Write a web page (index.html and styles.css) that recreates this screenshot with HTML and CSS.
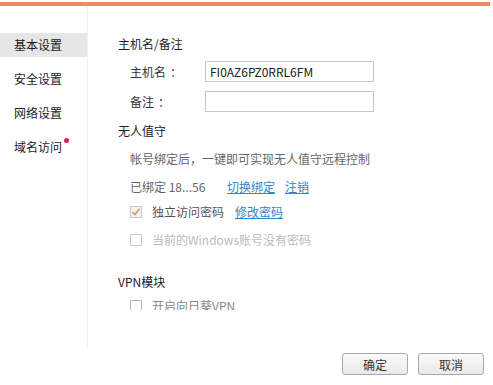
FILE: index.html
```html
<!DOCTYPE html>
<html lang="zh">
<head>
<meta charset="utf-8">
<link rel="stylesheet" href="styles.css">
</head>
<body>
<div class="topbar"></div>
<div class="main">
  <nav class="sidebar">
    <div class="nav-item active">基本设置</div>
    <div class="nav-item">安全设置</div>
    <div class="nav-item">网络设置</div>
    <div class="nav-item">域名访问<span class="dot"></span></div>
  </nav>
  <div class="content">
    <div class="section-title">主机名/备注</div>
    <div class="field first">
      <span class="label">主机名<span class="colon">：</span></span>
      <div class="input">FI0AZ6PZ0RRL6FM</div>
    </div>
    <div class="field">
      <span class="label">备注<span class="colon">：</span></span>
      <div class="input"></div>
    </div>
    <div class="section-title gap9">无人值守</div>
    <div class="line desc">帐号绑定后，一键即可实现无人值守远程控制</div>
    <div class="line bound"><span class="acct">已绑定 18...56</span><a class="link">切换绑定</a><a class="link">注销</a></div>
    <div class="line check-row"><span class="cb checked"><svg width="10" height="10" viewBox="0 0 10 10"><path d="M1.5 5.2 L4 7.6 L8.6 2" fill="none" stroke="#d49a6a" stroke-width="1.6"/></svg></span><span class="cb-text">独立访问密码</span><a class="link link-pw">修改密码</a></div>
    <div class="line check-row disabled"><span class="cb"></span><span class="cb-text">当前的Windows账号没有密码</span></div>
    <div class="section-title vpn">VPN模块</div>
    <div class="line check-row vpn-row"><span class="cb"></span><span class="cb-text">开启向日葵VPN</span></div>
  </div>
</div>
<div class="footer">
  <button class="btn">确定</button>
  <button class="btn">取消</button>
</div>
</body>
</html>
```

FILE: styles.css
```css
html, body {
  margin: 0;
  padding: 0;
  background: #ffffff;
}
body {
  width: 493px;
  height: 385px;
  overflow: hidden;
  font-family: "Noto Sans CJK SC", "Microsoft YaHei", sans-serif;
  font-size: 12px;
  color: #333333;
}
.topbar {
  margin-top: 2px;
  height: 4px;
  width: 490px;
  background: #f08b5e;
}
.main {
  display: flex;
  height: 344px;
}
.sidebar {
  width: 88px;
  flex: none;
  border-right: 1px solid #f1f1f1;
  padding-top: 27px;
  box-sizing: border-box;
  display: flex;
  flex-direction: column;
  gap: 10px;
}
.nav-item {
  position: relative;
  height: 24px;
  line-height: 24px;
  padding-left: 14px;
  font-size: 12px;
  color: #1a1a1a;
}
.nav-item.active {
  background: #e6e6e6;
}
.dot {
  position: absolute;
  left: 64px;
  top: 3px;
  width: 5px;
  height: 5px;
  border-radius: 50%;
  background: #e0204c;
}
.content {
  flex: 1;
  padding-left: 30px;
  padding-top: 28px;
  height: 304px;
  box-sizing: border-box;
  overflow: hidden;
}
.section-title {
  line-height: 20px;
  height: 20px;
  color: #222222;
}
.section-title.gap9 {
  margin-top: 9px;
}
.field {
  display: flex;
  align-items: center;
  margin-top: 9px;
  padding-left: 12px;
}
.field.first {
  margin-top: 7px;
}
.label {
  width: 75px;
  color: #333333;
}
.colon {
  margin-left: 4px;
}
.input {
  width: 169px;
  height: 21px;
  box-sizing: border-box;
  border: 1px solid #c6c6c6;
  line-height: 19px;
  padding-left: 4px;
  color: #222222;
}
.line {
  line-height: 20px;
  height: 20px;
  padding-left: 12px;
  display: flex;
  align-items: center;
}
.desc {
  margin-top: 8px;
  color: #666666;
}
.bound {
  margin-top: 8px;
  color: #666666;
}
.acct {
  width: 97px;
}
.link {
  color: #2f86c8;
  text-decoration: underline;
  margin-right: 10px;
}
.check-row {
  margin-top: 5px;
  color: #555555;
}
.check-row.disabled {
  margin-top: 8px;
  color: #bbbbbb;
}
.cb {
  width: 12px;
  height: 12px;
  box-sizing: border-box;
  border: 1px solid #b5b5b5;
  margin-right: 10px;
  display: flex;
  align-items: center;
  justify-content: center;
  background: #ffffff;
}
.cb.checked {
  border-color: #c9c9c9;
  background: #f3f3f3;
}
.disabled .cb {
  border-color: #cccccc;
}
.cb-text {
  margin-right: 11px;
}
.section-title.vpn {
  margin-top: 22px;
}
.vpn-row {
  margin-top: 4px;
  color: #888888;
}
.footer {
  display: flex;
  justify-content: flex-end;
  gap: 10px;
  padding-right: 9px;
  margin-top: 3px;
}
.btn {
  width: 66px;
  height: 22px;
  border: 1px solid #a9a9a9;
  border-radius: 3px;
  background: linear-gradient(#fafafa, #e9e9e9);
  font-family: "Noto Sans CJK SC", sans-serif;
  font-size: 12px;
  color: #333333;
  padding: 0;
}
```
